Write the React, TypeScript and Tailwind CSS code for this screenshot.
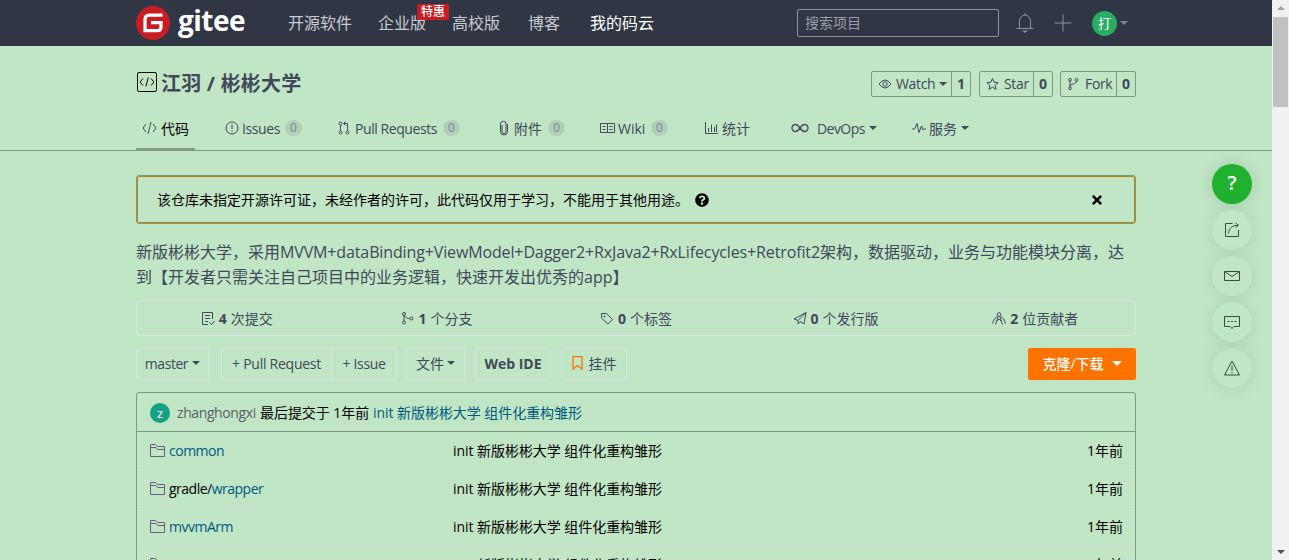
import type { ReactNode } from "react";
import { FaQuestionCircle, FaTimes } from "react-icons/fa";

function Icon({ children, className = "", w = 14, h = 14, sw = 1 }: { children: ReactNode; className?: string; w?: number; h?: number; sw?: number }) {
  return (
    <svg
      className={`shrink-0 ${className}`}
      width={w}
      height={h}
      viewBox={`0 0 ${w} ${h}`}
      fill="none"
      stroke="currentColor"
      strokeWidth={sw}
    >
      {children}
    </svg>
  );
}

function Caret({ className = "" }: { className?: string }) {
  return (
    <svg className={`shrink-0 ${className}`} width="8" height="4" viewBox="0 0 8 4" fill="currentColor">
      <path d="M0 0h8L4 4z" />
    </svg>
  );
}

function Header() {
  return (
    <header className="h-[46px] bg-[#303643]">
      <div className="w-[1000px] h-[46px] mx-auto flex items-center text-[16px] text-[#c9ccd2] whitespace-nowrap">
        <svg className="shrink-0" width="34" height="34" viewBox="0 0 34 34">
          <circle cx="17" cy="17" r="17" fill="#c71d23" />
          <path d="M26.5 9.2H13.5Q9 9.2 9 13.7V24.6H21.6Q25 24.6 25 21.2V16.6H15" fill="none" stroke="#fff" strokeWidth="3.2" />
        </svg>
        <span className="ml-2 -mt-[6px] w-[110px] text-[28px] leading-[34px] font-bold text-white tracking-[-0.5px]">gitee</span>
        <span className="w-[90px]">开源软件</span>
        <span className="w-[74px] relative">
          企业版
          <span className="absolute left-[39px] -top-[7px] w-8 h-4 rounded-[2px] bg-[#c71d23] text-white text-[12px] leading-4 text-center font-medium">
            特惠
          </span>
        </span>
        <span className="w-[76px]">高校版</span>
        <span className="w-[62px]">博客</span>
        <span className="w-[207px] text-white">我的码云</span>
        <div className="w-[202px] h-7 border border-[#8c92a4] rounded-[2px] px-[7px] text-[14px] leading-[26px] text-[#9a9ea9]">
          搜索项目
        </div>
        <Icon w={18} h={22} className="ml-[17px] text-[#8c92a4]">
          <path d="M3.5 16V9a5.5 6 0 0 1 11 0v7M.5 16.5h17M9 1v2" />
          <path d="M6 18.5h6L9 21z" fill="currentColor" stroke="none" />
        </Icon>
        <Icon w={18} h={18} className="ml-5 text-[#8c92a4]">
          <path d="M9 .5v17M.5 9h17" />
        </Icon>
        <span className="ml-5 size-[25px] rounded-full bg-[#27ae60] text-white text-[13px] leading-[25px] text-center">打</span>
        <Caret className="ml-[3px] text-[#7d8395]" />
      </div>
    </header>
  );
}

function CountButton({ icon, label, count, className, caret }: { icon: ReactNode; label: string; count: number; className: string; caret?: boolean }) {
  return (
    <div className={`flex h-[26px] border border-[#7f9982] rounded-[2px] text-[14px] leading-6 ${className}`}>
      <div className="flex-1 flex items-center pl-[6px]">
        <span className="w-[18px]">{icon}</span>
        <span className="tracking-[-0.35px]">{label}</span>
        {caret && <Caret className="ml-1" />}
      </div>
      <div className="w-[19px] border-l border-[#7f9982] text-center font-bold">{count}</div>
    </div>
  );
}

function Title() {
  return (
    <div className="h-[61px] pt-[25px] flex items-start text-[#40485b]">
      <Icon w={22} h={22} className="text-black">
        <rect x="1.5" y="1.5" width="19" height="19" rx="1.5" />
        <path d="M7 7.5L4 11l3 3.5M15 7.5l3 3.5-3 3.5M12.3 6.5l-2.4 9" />
      </Icon>
      <h1 className="ml-[3px] mt-px flex-1 text-[20px] leading-6 font-bold whitespace-nowrap tracking-[0.2px]">江羽 / 彬彬大学</h1>
      <CountButton
        className="w-[100px] mr-2"
        label="Watch"
        count={1}
        caret
        icon={
          <Icon w={14} h={14}>
            <path d="M1 7q6-8 12 0-6 8-12 0z" />
            <circle cx="7" cy="7" r="2.2" />
          </Icon>
        }
      />
      <CountButton
        className="w-[74px] mr-[7px]"
        label="Star"
        count={0}
        icon={
          <Icon w={14} h={14}>
            <path d="M6.5 1.5l1.6 3.7 4 .4-3 2.7.9 4-3.5-2.100-3.500 2.100.9-4-3-2.700 4-.4z" />
          </Icon>
        }
      />
      <CountButton
        className="w-[76px]"
        label="Fork"
        count={0}
        icon={
          <Icon w={14} h={14}>
            <circle cx="3" cy="2.8" r="1.4" />
            <circle cx="3" cy="11.2" r="1.4" />
            <circle cx="9.5" cy="2.8" r="1.4" />
            <path d="M3 4.2v5.6M9.5 4.2C9.5 7.5 3 6.5 3 9.5" />
          </Icon>
        }
      />
    </div>
  );
}

function Badge() {
  return <span className="ml-[6px] w-[17px] h-4 rounded-full bg-[#b0d0b8] text-[#7483a0] text-[12px] leading-4 text-center">0</span>;
}

function Tabs() {
  return (
    <nav className="h-[44px] flex text-[14px] text-[#40485b] whitespace-nowrap *:flex *:h-[42px] *:items-center">
      <div className="w-[59px] h-[44px]! mr-[30px] pl-[6px] text-black border-b-3 border-[#7f9982] pt-px">
        <Icon w={15} h={14} className="mr-1 text-[#40485b]">
          <path d="M4 3L1 7l3 4M11 3l3 4-3 4M9 1L6 13" />
        </Icon>
        代码
      </div>
      <div className="w-[113px]">
        <Icon w={14} h={14} className="mr-[3px]">
          <circle cx="7" cy="7" r="6" />
          <path d="M7 3.5v4.5M7 9.5v1.2" />
        </Icon>
        <span className="w-[37px] tracking-[-0.4px]">Issues</span>
        <Badge />
      </div>
      <div className="w-[161px]">
        <Icon w={13} h={14} className="mr-1">
          <circle cx="2.5" cy="2.5" r="1.5" />
          <circle cx="2.5" cy="11.5" r="1.5" />
          <circle cx="9.5" cy="11.5" r="1.5" />
          <path d="M2.5 4v6M9.5 10V2.5H6M7.5 .5l-2 2 2 2" />
        </Icon>
        <span className="w-[82px] tracking-[-0.43px]">Pull Requests</span>
        <Badge />
      </div>
      <div className="w-[101px]">
        <Icon w={10} h={15} className="mr-[5px]">
          <path d="M3 4v6.500a2 2 0 0 0 4 0V3a2 2 0 0 0-5.500 0v7.500a3.500 3.500 0 0 0 7 0V3" />
        </Icon>
        附件
        <Badge />
      </div>
      <div className="w-[105px]">
        <Icon w={15} h={12} className="mr-[3px]">
          <path d="M.5 1.5h14v9H.5zM7.5 1.5v9M2.5 4.500h3M2.500 7.500h3M9.500 4.500h3M9.500 7.500h3" />
        </Icon>
        <span className="w-[27px]">Wiki</span>
        <Badge />
      </div>
      <div className="w-[86px]">
        <Icon w={13} h={13} className="mr-1">
          <path d="M.5 0v11.5H13M3.5 10V6M6.5 10V2.5M9.5 10V5M11.5 10V2.5" />
        </Icon>
        统计
      </div>
      <div className="w-[121px]">
        <Icon w={18} h={10} sw={1.4} className="mr-2">
          <path d="M9 5C7 2 5.8 1.5 4.5 1.5a3.5 3.5 0 0 0 0 7C5.8 8.5 7 8 9 5s3.2-3.5 4.5-3.5a3.5 3.5 0 0 1 0 7C12.2 8.5 11 8 9 5z" />
        </Icon>
        <span className="w-[49px] tracking-[-0.55px]">DevOps</span>
        <Caret className="ml-[3px]" />
      </div>
      <div>
        <Icon w={14} h={12} className="mr-[3px]">
          <path d="M0 7h2.5L5 1.5 7 10.5 9.5 4 11 8l1-1h2" />
        </Icon>
        服务
        <Caret className="ml-1" />
      </div>
    </nav>
  );
}

function Notice() {
  return (
    <div className="h-[49px] border border-[#7f9982] rounded-[3px]">
      <div className="h-[47px] border border-[#b6860e] rounded-[2px] flex items-center pl-[19px] pr-[30px] text-[14px] text-black">
        该仓库未指定开源许可证，未经作者的许可，此代码仅用于学习，不能用于其他用途。
        <FaQuestionCircle className="ml-[6px] size-[14px]" />
        <FaTimes className="ml-auto size-[14px]" />
      </div>
    </div>
  );
}

function Stats() {
  const stats = [
    {
      n: 4,
      label: "次提交",
      icon: <path d="M11.5 8V1.5h-10v12H7M4 4.5h5M4 7.5h5M4 10.5h3M8.5 11.5l2 2 3-3.5" />,
    },
    {
      n: 1,
      label: "个分支",
      icon: (
        <>
          <circle cx="4" cy="3" r="1.5" />
          <circle cx="4" cy="11.5" r="1.5" />
          <circle cx="11.5" cy="7.5" r="1.5" />
          <path d="M4 4.5V10M4.500 4.500c1 2.500 3 3 5.500 3" />
        </>
      ),
    },
    {
      n: 0,
      label: "个标签",
      icon: (
        <>
          <path d="M1.5 2.500h5l6 6-4.500 4.500-6.500-6z" />
          <circle cx="4.5" cy="5.5" r=".6" />
        </>
      ),
    },
    { n: 0, label: "个发行版", icon: <path d="M1 8L13 1.5 11 13 7 10.5 5 13V9.5L13 1.5M1 8l4 1.5" /> },
    {
      n: 2,
      label: "位贡献者",
      icon: (
        <>
          <circle cx="7" cy="3.5" r="1.800" />
          <path d="M3.500 13.500L6 6M10.500 13.500L8 6M5.500 5.500C3 6.500 1.500 9 .5 12.500M8.500 5.500c2.500 1 4 3.500 5 7M4.500 10.500L7 8l2.500 2.500" />
        </>
      ),
    },
  ];
  return (
    <div className="mt-[10px] h-9 border border-[#dbe1e6] rounded-[3px] flex text-[14px] text-[#40485b]">
      {stats.map((s) => (
        <div key={s.label} className="flex-1 flex items-center justify-center">
          <Icon w={14} h={15} className="mr-1">
            {s.icon}
          </Icon>
          <b className="mr-1">{s.n}</b>
          {s.label}
        </div>
      ))}
    </div>
  );
}

function Toolbar() {
  return (
    <div className="mt-3 flex h-8 text-[14px] text-[#40485b] whitespace-nowrap *:flex *:items-center *:justify-center *:border *:border-[#dbe1e6] *:rounded-[2px] *:pb-0.5">
      <div className="w-[73px] mr-3 tracking-[-0.45px]">
        master
        <Caret className="ml-1" />
      </div>
      <div className="w-[111px] rounded-r-none! tracking-[-0.25px]">+ Pull Request</div>
      <div className="w-[66px] -ml-px mr-[9px] rounded-l-none! tracking-[-0.3px]">+ Issue</div>
      <div className="w-[59px] mr-[10px]">
        文件
        <Caret className="ml-[3px]" />
      </div>
      <div className="w-[76px] mr-[10px] font-bold">Web IDE</div>
      <div className="w-[66px]">
        <Icon w={11} h={14} className="mr-[6px] text-[#fe7300]" sw={1.3}>
          <path d="M1 .7h9v12.3L5.5 9.5 1 13z" />
        </Icon>
        挂件
      </div>
      <div className="w-[108px] ml-auto bg-[#fe7300] border-[#fe7300]! text-white font-medium">
        克隆/下载
        <Caret className="ml-2 w-[10px] h-[5px]" />
      </div>
    </div>
  );
}

function Folder() {
  return (
    <Icon w={16} h={15} className="mr-[3px] text-[#6b5c83]">
      <path d="M.5 13.500v-12h5l2 2h7v10zM.5 4.500h5.500l1.500 2h7" />
    </Icon>
  );
}

function Files() {
  const files = [
    { dir: "", name: "common" },
    { dir: "gradle/", name: "wrapper" },
    { dir: "", name: "mvvmArm" },
    { dir: "", name: "mvvm" },
  ];
  return (
    <div className="mt-3 border border-[#7f9982] rounded-t-[3px] text-[14px] text-black whitespace-nowrap">
      <div className="h-[39px] border-b border-[#7f9982] flex items-center pl-[13px]">
        <span className="size-5 rounded-full bg-[#16a085] text-white text-[13px] text-center leading-5 mt-[2px]">z</span>
        <span className="ml-[7px] w-[83px] text-[#5a5f6a] tracking-[-0.4px]">zhanghongxi</span>
        <span className="w-[113px] tracking-[-0.05px]">最后提交于 1年前</span>
        <span className="text-[#005980] tracking-[-0.05px]">init 新版彬彬大学 组件化重构雏形</span>
      </div>
      {files.map((f) => (
        <div key={f.name} className="h-[38px] border-b border-[#d3e3db] flex items-center pl-[13px] pr-3">
          <div className="w-[303px] flex items-center tracking-[-0.5px]">
            <Folder />
            {f.dir}
            <span className="text-[#005980]">{f.name}</span>
          </div>
          <span className="flex-1 tracking-[-0.05px]">init 新版彬彬大学 组件化重构雏形</span>
          <span>1年前</span>
        </div>
      ))}
    </div>
  );
}

function SideTools() {
  const icons = [
    <path d="M8.5 1.5h-7v13h13V8M4.5 11.5C5 6 8 3.5 14 3.2M11.5 1l3 2.2-3 2.3" />,
    <path d="M.5 3.5h15v9H.5zM.5 3.5L8 8.500l7.500-5" />,
    <path d="M.5 2.5h15v10h-5.5l-2 2-2-2H.5zM3.5 7.500h2M7 7.500h2M10.500 7.500h2" />,
    <path d="M8 1L.5 15h15zM8 5.5v5.5M8 12v1.5" />,
  ];
  return (
    <div className="absolute left-[1212px] top-[164px] flex flex-col gap-[6px]">
      <div className="size-10 rounded-full bg-[#21b131] text-white text-[20px] leading-[38px] text-center font-semibold shadow-[0_0_16px_rgba(0,60,30,.16)]">
        ?
      </div>
      {icons.map((icon, i) => (
        <div key={i} className="size-10 rounded-full bg-[#c1e6c5] flex items-center justify-center pb-px text-[#3c4a40] shadow-[0_1px_16px_rgba(0,60,30,.12)]">
          <Icon w={16} h={16}>
            {icon}
          </Icon>
        </div>
      ))}
    </div>
  );
}

function Scrollbar() {
  return (
    <div className="w-[17px] h-[560px] bg-[#f1f1f1] flex flex-col items-center justify-between text-[#505050] py-[6px]">
      <div className="flex flex-col items-center">
        <Caret className="rotate-180 text-[#a3a3a3]" />
        <div className="mt-[7px] w-[15px] h-[90px] bg-[#c1c1c1]" />
      </div>
      <Caret />
    </div>
  );
}

export default function App() {
  return (
    <div className="relative flex w-[1289px] h-[560px] overflow-hidden bg-[#c1e6c5] font-['Open_Sans','Noto_Sans_CJK_SC',sans-serif]">
      <div className="w-[1272px]">
        <Header />
        <div className="border-b border-[#7f9982]">
          <div className="w-[1000px] mx-auto h-[104px]">
            <Title />
            <Tabs />
          </div>
        </div>
        <main className="w-[1000px] mx-auto pt-6">
          <Notice />
          <p className="mt-4 text-[16px] leading-[25px] text-[#40485b] whitespace-nowrap">
            新版彬彬大学，采用
            <span className="tracking-[-0.13px]">MVVM+dataBinding+ViewModel+Dagger2+RxJava2+RxLifecycles+Retrofit2</span>
            架构，数据驱动，业务与功能模块分离，达
            <br />
            到【开发者只需关注自己项目中的业务逻辑，快速开发出优秀的app】
          </p>
          <Stats />
          <Toolbar />
          <Files />
        </main>
      </div>
      <Scrollbar />
      <SideTools />
    </div>
  );
}
